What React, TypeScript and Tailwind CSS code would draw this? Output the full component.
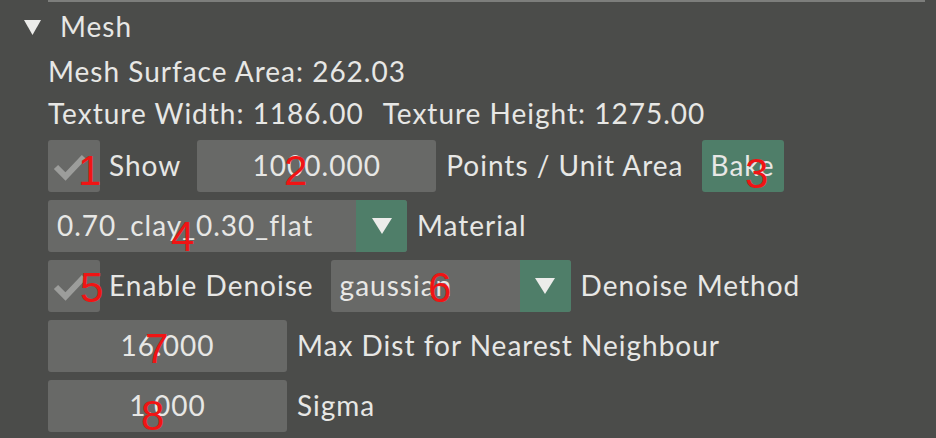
import React from 'react';

const font = "font-['Lato','Open_Sans',sans-serif]";

const Check = () => (
  <div className="w-[52px] h-[52px] shrink-0 rounded-[3px] bg-[#686967]">
    <svg width="52" height="52" viewBox="0 0 52 52">
      <path d="M8 27 L17.5 36.5 L36 17" fill="none" stroke="#9c9d9b" strokeWidth="6" strokeLinejoin="miter" />
    </svg>
  </div>
);

const Arrow = () => (
  <div className="w-[51px] h-full shrink-0 bg-[#4f7e69] rounded-r-[3px] flex items-center justify-center">
    <svg width="22" height="18" viewBox="0 0 22 18">
      <path d="M1 1 L21 1 L11 17 Z" fill="#ececea" />
    </svg>
  </div>
);

const Combo = ({ value, width }: { value: string; width: string }) => (
  <div className={`${width} h-[52px] shrink-0 flex rounded-[3px] bg-[#686967]`}>
    <div className="flex-1 flex items-center pl-[9px]">{value}</div>
    <Arrow />
  </div>
);

const NumInput = ({ value, width }: { value: string; width: string }) => (
  <div className={`${width} h-[52px] shrink-0 rounded-[3px] bg-[#686967] flex items-center justify-center`}>
    {value}
  </div>
);

const marks = [
  { n: '1', x: 'left-[78px] top-[150px]' },
  { n: '2', x: 'left-[284px] top-[150px]' },
  { n: '3', x: 'left-[745px] top-[153px]' },
  { n: '4', x: 'left-[171px] top-[216px]' },
  { n: '5', x: 'left-[80px] top-[267px]' },
  { n: '6', x: 'left-[428px] top-[267px]' },
  { n: '7', x: 'left-[145px] top-[328px]' },
  { n: '8', x: 'left-[141px] top-[395px]' },
];

export default function App() {
  return (
    <div className={`relative w-[936px] h-[438px] overflow-hidden bg-[#4b4c4a] text-[#e7e7e5] text-[28px] leading-[1.2] tracking-[1px] ${font}`}>
      <div className="ml-[48px] mr-[11px] h-[2px] bg-[#7d7e7c]" />

      <div className="h-[50px] flex items-center">
        <svg className="ml-[24px]" width="17" height="15" viewBox="0 0 17 15">
          <path d="M0 0 L17 0 L8.5 15 Z" fill="#ececea" />
        </svg>
        <span className="ml-[19px]">Mesh</span>
      </div>

      <div className="pl-[48px]">
        <div className="h-[40px] flex items-center">Mesh Surface Area: 262.03</div>
        <div className="h-[44px] flex items-center">
          <span>Texture Width: 1186.00</span>
          <span className="ml-[19px]">Texture Height: 1275.00</span>
        </div>

        <div className="mt-[4px] flex flex-col gap-[8px]">
          <div className="h-[52px] flex items-center">
            <Check />
            <span className="ml-[9px]">Show</span>
            <div className="ml-[16px]">
              <NumInput value="1000.000" width="w-[239px]" />
            </div>
            <span className="ml-[10px]">Points / Unit Area</span>
            <button className="ml-[18px] h-[52px] w-[82px] rounded-[3px] bg-[#4f7e69] tracking-[1px]">Bake</button>
          </div>

          <div className="h-[52px] flex items-center">
            <Combo value="0.70_clay_0.30_flat" width="w-[359px]" />
            <span className="ml-[10px]">Material</span>
          </div>

          <div className="h-[52px] flex items-center">
            <Check />
            <span className="ml-[9px]">Enable Denoise</span>
            <div className="ml-[17px]">
              <Combo value="gaussian" width="w-[240px]" />
            </div>
            <span className="ml-[10px]">Denoise Method</span>
          </div>

          <div className="h-[52px] flex items-center">
            <NumInput value="16.000" width="w-[239px]" />
            <span className="ml-[10px]">Max Dist for Nearest Neighbour</span>
          </div>

          <div className="h-[52px] flex items-center">
            <NumInput value="1.000" width="w-[239px]" />
            <span className="ml-[10px]">Sigma</span>
          </div>
        </div>
      </div>

      {marks.map((m) => (
        <span
          key={m.n}
          className={`absolute ${m.x} text-[42px] leading-none tracking-normal text-[#f01414] font-['Liberation_Sans',Arial,sans-serif]`}
        >
          {m.n}
        </span>
      ))}
    </div>
  );
}
